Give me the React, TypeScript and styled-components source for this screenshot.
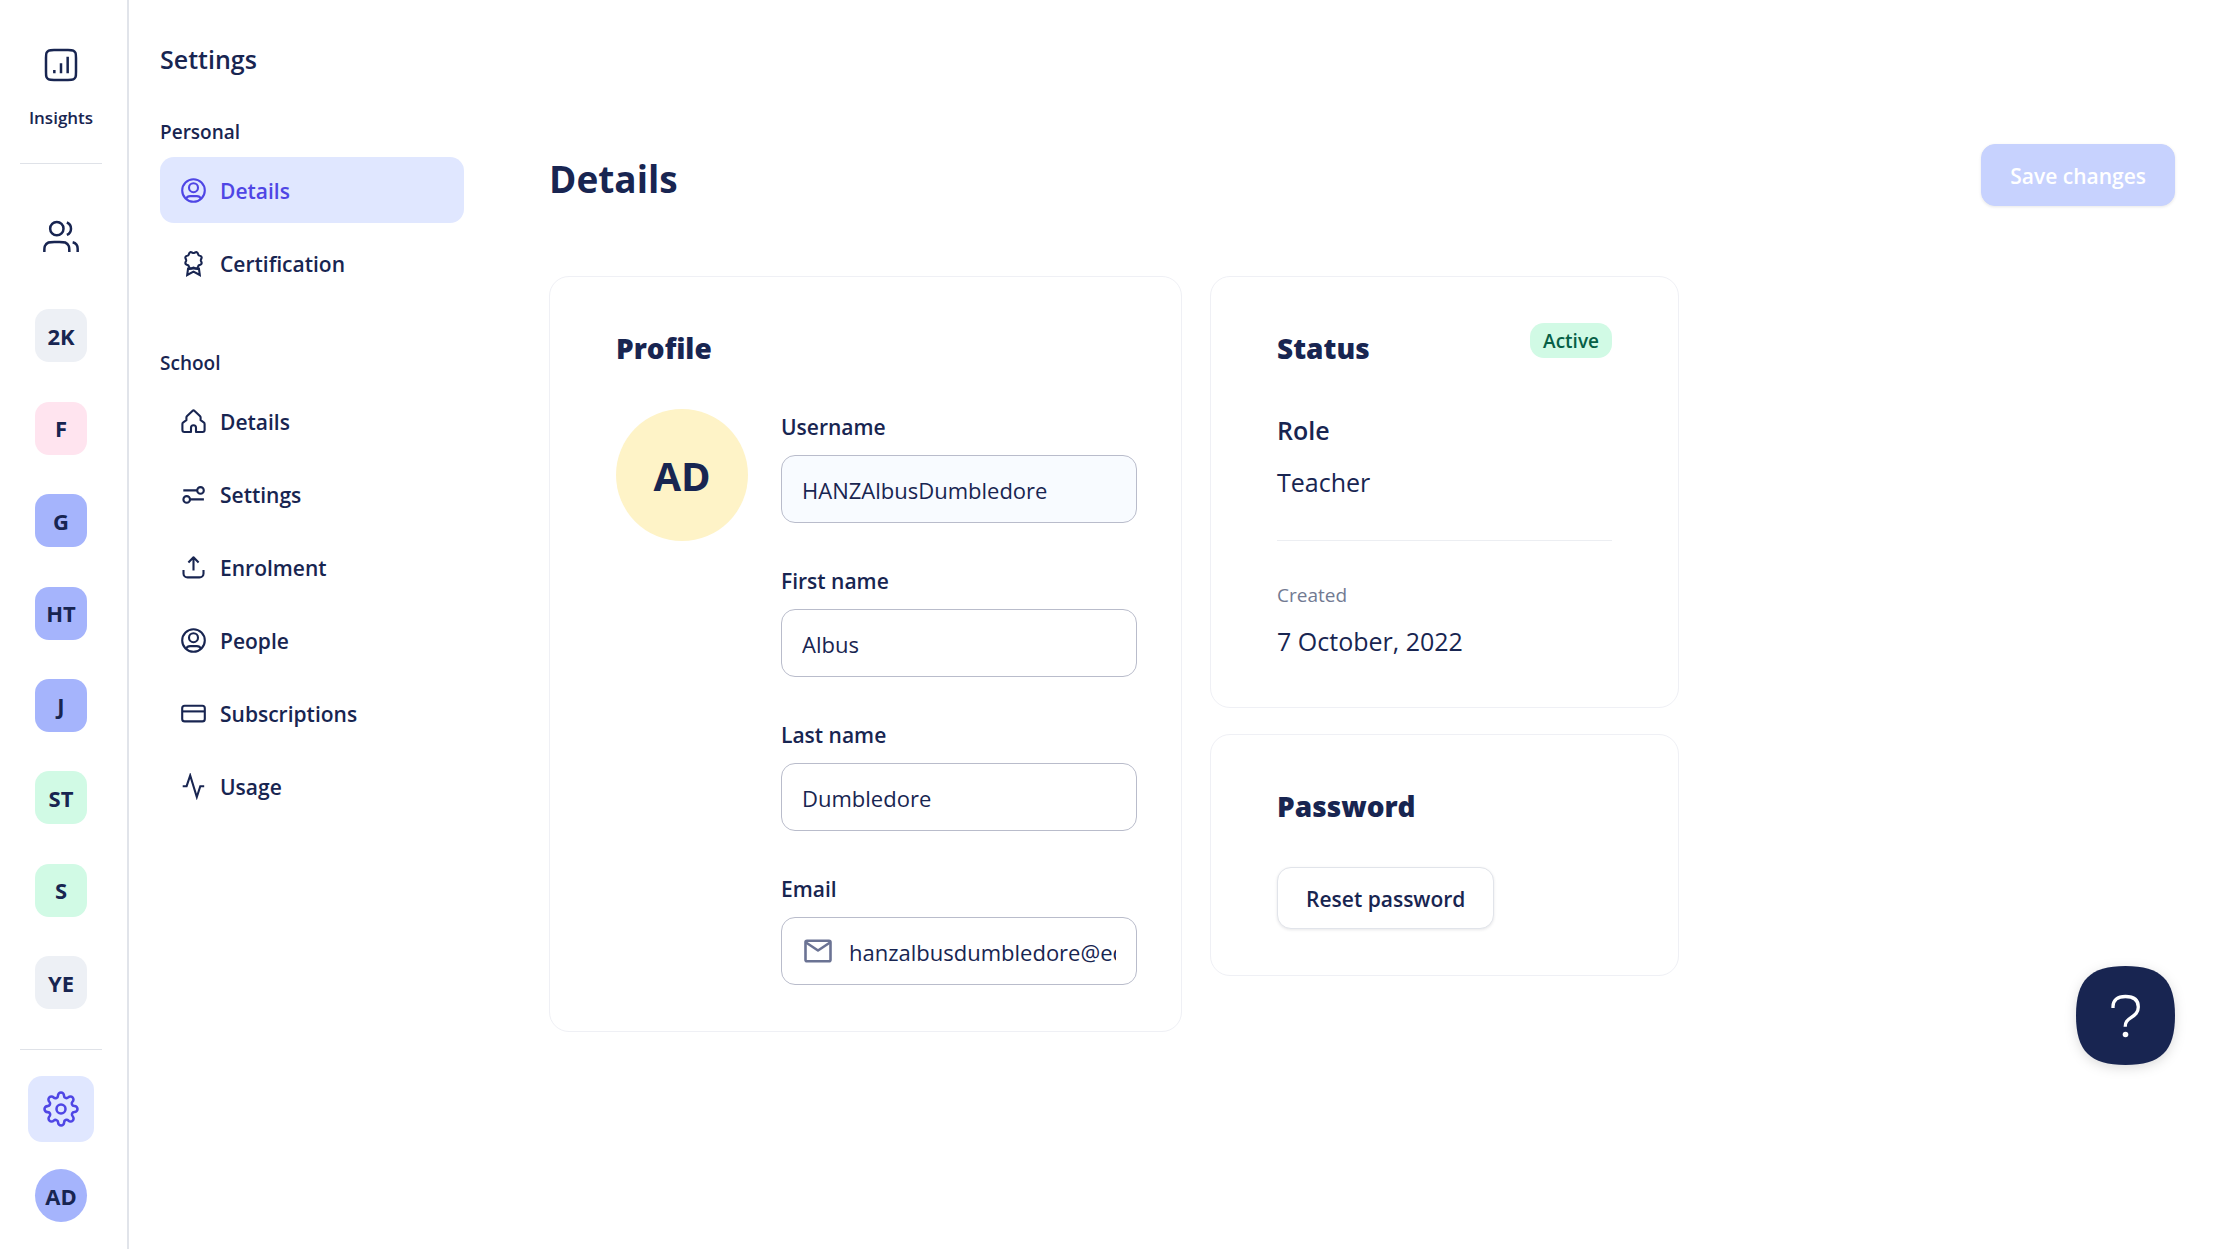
import React from "react";
import styled, { createGlobalStyle } from "styled-components";
import { FiSettings } from "react-icons/fi";

const navy = "#182551";
const indigo = "#4f46e5";
const lilac = "#e0e7ff";

const GlobalStyle = createGlobalStyle`
  *, *::before, *::after { box-sizing: border-box; }
  body {
    margin: 0;
    background: #fff;
    color: ${navy};
    font-family: "Open Sans", "Noto Sans", sans-serif;
    font-size: 21px;
  }
  h1, h2, h3, p, ul, dl, dd, dt { margin: 0; padding: 0; }
  ul { list-style: none; }
  a { color: inherit; text-decoration: none; }
  button, input { font: inherit; color: inherit; }
`;

const Shell = styled.div`
  display: flex;
  min-height: 100vh;
`;

/* ---------- Left rail ---------- */

const Rail = styled.nav`
  flex: none;
  display: flex;
  flex-direction: column;
  align-items: center;
  width: 129px;
  height: 100vh;
  padding: 32px 5px 27px 0;
  border-right: 2px solid #e1e4ea;
`;

const RailHeader = styled.div`
  padding-bottom: 31px;
`;

const RailLink = styled.a`
  display: flex;
  flex-direction: column;
  align-items: center;
`;

const IconBox = styled.span<{ $active?: boolean }>`
  display: flex;
  align-items: center;
  justify-content: center;
  width: 66px;
  height: 66px;
  border-radius: 14px;
  color: ${(p) => (p.$active ? indigo : navy)};
  background: ${(p) => (p.$active ? lilac : "transparent")};
`;

const RailLabel = styled.span`
  margin-top: 6px;
  font-size: 17px;
  line-height: 28px;
  font-weight: 600;
`;

const RailRule = styled.hr`
  width: 82px;
  height: 1px;
  margin: 0;
  border: 0;
  background: #dfe2e8;
`;

const RailList = styled.ul`
  flex: 1;
  display: flex;
  flex-direction: column;
  align-items: center;
  justify-content: space-between;
  padding: 40px 0;
`;

const Tile = styled.a<{ $bg: string; $round?: boolean }>`
  display: flex;
  align-items: center;
  justify-content: center;
  width: 52px;
  height: 53px;
  border-radius: ${(p) => (p.$round ? "50%" : "14px")};
  background: ${(p) => p.$bg};
  font-size: 22px;
  font-weight: 700;
`;

const RailFooter = styled.div`
  display: flex;
  flex-direction: column;
  align-items: center;
  gap: 27px;
  padding-top: 26px;
`;

/* ---------- Settings menu ---------- */

const Menu = styled.nav`
  flex: none;
  width: 366px;
  padding: 39px 31px;
`;

const MenuTitle = styled.h2`
  font-size: 25px;
  line-height: 40px;
  font-weight: 600;
`;

const MenuGroup = styled.section`
  margin-top: 38px;

  & + & {
    margin-top: 52px;
  }
`;

const GroupTitle = styled.h3`
  margin-bottom: 10px;
  font-size: 19px;
  line-height: 30px;
  font-weight: 600;
`;

const MenuList = styled.ul`
  display: flex;
  flex-direction: column;
  gap: 7px;
`;

const MenuLink = styled.a<{ $active?: boolean }>`
  display: flex;
  align-items: center;
  gap: 13px;
  height: 66px;
  padding: 0 20px;
  border-radius: 14px;
  font-size: 21px;
  font-weight: 600;
  color: ${(p) => (p.$active ? indigo : navy)};
  background: ${(p) => (p.$active ? lilac : "transparent")};
`;

const MenuText = styled.span`
  padding-top: 2px;
`;

/* ---------- Content ---------- */

const Main = styled.main`
  flex: 1;
  min-width: 0;
  padding: 144px 52px 52px 54px;
`;

const PageHead = styled.header`
  display: flex;
  align-items: flex-start;
  justify-content: space-between;
`;

const PageTitle = styled.h1`
  font-size: 37px;
  line-height: 70px;
  font-weight: 700;
`;

const Button = styled.button<{ $primary?: boolean }>`
  height: 62px;
  padding: 2px 28px 0;
  border: 1px solid ${(p) => (p.$primary ? "#c7d2fe" : "#e1e4ea")};
  border-radius: 14px;
  background: ${(p) => (p.$primary ? "#c7d2fe" : "#fff")};
  color: ${(p) => (p.$primary ? "#fff" : navy)};
  font-size: 21px;
  font-weight: 600;
  box-shadow: 0 1px 3px rgba(16, 24, 40, 0.1);
`;

const Cards = styled.div`
  display: grid;
  grid-template-columns: minmax(0, 27fr) minmax(0, 20fr);
  gap: 28px;
  align-items: start;
  max-width: 1130px;
  margin-top: 62px;
`;

const Column = styled.div`
  display: flex;
  flex-direction: column;
  gap: 26px;
`;

const Card = styled.section`
  padding: 46px 66px;
  border: 1px solid #eff0f5;
  border-radius: 20px;
`;

const ProfileCard = styled(Card)`
  padding-right: 44px;
`;

const StatusCard = styled(Card)`
  padding-bottom: 42px;
`;

const CardHead = styled.div`
  display: flex;
  align-items: flex-start;
  justify-content: space-between;
`;

const CardTitle = styled.h2`
  font-size: 28px;
  line-height: 50px;
  font-weight: 800;
`;

const ProfileBody = styled.div`
  display: flex;
  align-items: flex-start;
  gap: 33px;
  margin-top: 36px;
`;

const Avatar = styled.div`
  flex: none;
  display: flex;
  align-items: center;
  justify-content: center;
  width: 132px;
  height: 132px;
  border-radius: 50%;
  background: #fef3c7;
  font-size: 40px;
  font-weight: 700;
`;

const Fields = styled.form`
  flex: 1;
  min-width: 0;
  display: flex;
  flex-direction: column;
  gap: 40px;
`;

const Field = styled.div`
  display: flex;
  flex-direction: column;
  gap: 10px;
`;

const Label = styled.label`
  font-size: 21px;
  line-height: 36px;
  font-weight: 600;
`;

const InputBox = styled.div<{ $muted?: boolean }>`
  display: flex;
  align-items: center;
  gap: 15px;
  height: 68px;
  padding: 0 20px;
  border: 1px solid #b9bccb;
  border-radius: 14px;
  background: ${(p) => (p.$muted ? "#f8fbff" : "#fff")};
  color: #6b7394;

  svg {
    flex: none;
  }
`;

const Input = styled.input`
  flex: 1;
  min-width: 0;
  padding: 1px 0 0;
  border: 0;
  outline: 0;
  background: transparent;
  color: ${navy};
  font-size: 22px;
`;

const Badge = styled.span`
  padding: 1px 13px 0;
  border-radius: 14px;
  background: #d1fae5;
  color: #065f46;
  font-size: 19px;
  line-height: 34px;
  font-weight: 600;
`;

const Facts = styled.dl`
  padding-top: 29px;
`;

const Term = styled.dt`
  font-size: 25px;
  line-height: 56px;
  font-weight: 600;
`;

const SmallTerm = styled.dt`
  margin-top: 34px;
  padding-top: 32px;
  border-top: 1px solid #eceef2;
  color: #717a92;
  font-size: 19px;
  line-height: 44px;
`;

const Value = styled.dd`
  font-size: 25px;
  line-height: 48px;
`;

const CardAction = styled.div`
  margin-top: 36px;
`;

const HelpButton = styled.button`
  position: fixed;
  right: 52px;
  bottom: 184px;
  width: 99px;
  height: 99px;
  padding: 0;
  border: 0;
  background: none;
  cursor: pointer;
  filter: drop-shadow(0 3px 6px rgba(0, 0, 0, 0.14));

  svg {
    display: block;
  }
`;

/* ---------- Icons ---------- */

type IconProps = { children: React.ReactNode };

const RailIcon = ({ children }: IconProps) => (
  <svg width="40" height="40" viewBox="0 0 24 24" fill="none" stroke="currentColor" strokeWidth="1.5" aria-hidden="true">
    {children}
  </svg>
);

const MenuIcon = ({ children }: IconProps) => (
  <svg width="27" height="27" viewBox="0 0 27 27" fill="none" stroke="currentColor" strokeWidth="2.1" strokeLinejoin="round" aria-hidden="true">
    {children}
  </svg>
);

const scallop =
  Array.from({ length: 96 }, (_, i) => {
    const a = (i / 96) * Math.PI * 2;
    const r = 8 - 0.7 * Math.cos(8 * a);
    const x = 13.5 + r * Math.sin(a);
    const y = 10.3 - r * Math.cos(a);
    return `${i ? "L" : "M"}${x.toFixed(2)} ${y.toFixed(2)}`;
  }).join("") + "Z";

const UserCircle = () => (
  <MenuIcon>
    <circle cx="13.5" cy="13.5" r="11.3" />
    <circle cx="13.5" cy="10.7" r="4.5" />
    <path d="M6 21.9c.7-1.6 2.3-2.8 4.1-2.8h6.8c1.8 0 3.4 1.2 4.1 2.8" />
  </MenuIcon>
);

const Rosette = () => (
  <MenuIcon>
    <path d={scallop} />
    <path d="M8.2 17.6 7.2 25l6.3-3.4 6.3 3.4-1-7.4M8 19.2c3.5-1.1 7.5-1.1 11 0" strokeLinejoin="miter" />
  </MenuIcon>
);

const House = () => (
  <MenuIcon>
    <path d="M11 24v-4.3a2.5 2.5 0 0 1 5 0V24h6.6a2 2 0 0 0 2-2v-6a2 2 0 0 0-.9-1.7L20.6 12.2V9.6a2.4 2.4 0 0 0-.7-1.7L14.6 2.9a1.6 1.6 0 0 0-2.2 0L7.1 7.9a2.4 2.4 0 0 0-.7 1.7v2.6L3.3 14.3A2 2 0 0 0 2.4 16v6a2 2 0 0 0 2 2Z" />
  </MenuIcon>
);

const Switches = () => (
  <MenuIcon>
    <circle cx="20.5" cy="9.4" r="3.3" />
    <path d="M3.3 9.4H17M10.2 18.4h13.7" />
    <circle cx="6.7" cy="18.4" r="3.3" />
  </MenuIcon>
);

const Upload = () => (
  <MenuIcon>
    <path d="M13.5 16.5V3.3M8.4 8.4l5.1-5.1 5.1 5.1M3.5 16v3.4a4 4 0 0 0 4 4h12a4 4 0 0 0 4-4V16" />
  </MenuIcon>
);

const CreditCard = () => (
  <MenuIcon>
    <rect x="2.2" y="5.8" width="22.6" height="15.6" rx="2.5" />
    <path d="M2.2 11.4h22.6" />
  </MenuIcon>
);

const Activity = () => (
  <MenuIcon>
    <path d="M2.7 13.2h3.9L10.2 2.5 16.8 24l3.5-10.8h3.9" strokeLinejoin="miter" />
  </MenuIcon>
);

const ChartSquare = () => (
  <RailIcon>
    <path d="M8 15v2M12 11v6M16 7v10M7.8 21h8.4c1.68 0 2.52 0 3.162-.327a3 3 0 0 0 1.311-1.311C21 18.72 21 17.88 21 16.2V7.8c0-1.68 0-2.52-.327-3.162a3 3 0 0 0-1.311-1.311C18.72 3 17.88 3 16.2 3H7.8c-1.68 0-2.52 0-3.162.327a3 3 0 0 0-1.311 1.311C3 5.28 3 6.12 3 7.8v8.4c0 1.68 0 2.52.327 3.162a3 3 0 0 0 1.311 1.311C5.28 21 6.12 21 7.8 21Z" />
  </RailIcon>
);

const Users = () => (
  <RailIcon>
    <path d="M22 21V19C22 17.1362 20.7252 15.5701 19 15.126M15.5 3.29076C16.9659 3.88415 18 5.32131 18 7C18 8.67869 16.9659 10.1159 15.5 10.7092M17 21C17 19.1362 17 18.2044 16.6955 17.4693C16.2895 16.4892 15.5108 15.7105 14.5307 15.3045C13.7956 15 12.8638 15 11 15H8C6.13623 15 5.20435 15 4.46927 15.3045C3.48915 15.7105 2.71046 16.4892 2.30448 17.4693C2 18.2044 2 19.1362 2 21M13.5 7C13.5 9.20914 11.7091 11 9.5 11C7.29086 11 5.5 9.20914 5.5 7C5.5 4.79086 7.29086 3 9.5 3C11.7091 3 13.5 4.79086 13.5 7Z" />
  </RailIcon>
);

const Mail = () => (
  <svg width="32" height="24" viewBox="0 0 32 24" fill="none" stroke="currentColor" strokeWidth="2.6" strokeLinejoin="round" aria-hidden="true">
    <rect x="3.5" y="1.7" width="25" height="20.6" rx="1.5" />
    <path d="M4 3.5l12 8 12-8" />
  </svg>
);

const HelpMark = () => (
  <svg width="99" height="99" viewBox="0 0 99 99" fill="none" aria-hidden="true">
    <path d="M0 49.5C0 14 14 0 49.5 0S99 14 99 49.5 85 99 49.5 99 0 85 0 49.5Z" fill={navy} />
    <path d="M37 42v-1.5c0-6 4-10 12.5-10S62.3 34.5 62.3 41c0 5.5-3.3 8-7.3 10.7s-5.8 4.5-5.8 9.1" stroke="#fff" strokeWidth="3.3" />
    <circle cx="49.5" cy="68.5" r="2.8" fill="#fff" />
  </svg>
);

/* ---------- Data ---------- */

const classes = [
  { name: "2K", bg: "#edf0f5" },
  { name: "F", bg: "#ffe4ef" },
  { name: "G", bg: "#a5b4fc" },
  { name: "HT", bg: "#a5b4fc" },
  { name: "J", bg: "#a5b4fc" },
  { name: "ST", bg: "#d1fae5" },
  { name: "S", bg: "#d1fae5" },
  { name: "YE", bg: "#edf0f5" },
];

const groups = [
  {
    title: "Personal",
    items: [
      { label: "Details", icon: <UserCircle />, active: true },
      { label: "Certification", icon: <Rosette />, active: false },
    ],
  },
  {
    title: "School",
    items: [
      { label: "Details", icon: <House />, active: false },
      { label: "Settings", icon: <Switches />, active: false },
      { label: "Enrolment", icon: <Upload />, active: false },
      { label: "People", icon: <UserCircle />, active: false },
      { label: "Subscriptions", icon: <CreditCard />, active: false },
      { label: "Usage", icon: <Activity />, active: false },
    ],
  },
];

const fields = [
  { id: "username", label: "Username", value: "HANZAlbusDumbledore", locked: true },
  { id: "first-name", label: "First name", value: "Albus" },
  { id: "last-name", label: "Last name", value: "Dumbledore" },
  { id: "email", label: "Email", value: "hanzalbusdumbledore@education.com", icon: <Mail /> },
];

export default function App() {
  return (
    <>
      <GlobalStyle />
      <Shell>
        <Rail>
          <RailHeader>
            <RailLink href="#insights">
              <IconBox>
                <ChartSquare />
              </IconBox>
              <RailLabel>Insights</RailLabel>
            </RailLink>
          </RailHeader>
          <RailRule />
          <RailList>
            <li>
              <RailLink href="#people" aria-label="People">
                <IconBox>
                  <Users />
                </IconBox>
              </RailLink>
            </li>
            {classes.map((c) => (
              <li key={c.name}>
                <Tile href={`#${c.name}`} $bg={c.bg}>
                  {c.name}
                </Tile>
              </li>
            ))}
          </RailList>
          <RailRule />
          <RailFooter>
            <RailLink href="#settings" aria-label="Settings">
              <IconBox $active>
                <FiSettings size={36} strokeWidth={1.7} />
              </IconBox>
            </RailLink>
            <Tile href="#me" $bg="#a5b4fc" $round>
              AD
            </Tile>
          </RailFooter>
        </Rail>

        <Menu>
          <MenuTitle>Settings</MenuTitle>
          {groups.map((g) => (
            <MenuGroup key={g.title}>
              <GroupTitle>{g.title}</GroupTitle>
              <MenuList>
                {g.items.map((item) => (
                  <li key={item.label}>
                    <MenuLink href="#" $active={item.active}>
                      {item.icon}
                      <MenuText>{item.label}</MenuText>
                    </MenuLink>
                  </li>
                ))}
              </MenuList>
            </MenuGroup>
          ))}
        </Menu>

        <Main>
          <PageHead>
            <PageTitle>Details</PageTitle>
            <Button type="button" $primary>
              Save changes
            </Button>
          </PageHead>
          <Cards>
            <ProfileCard>
              <CardTitle>Profile</CardTitle>
              <ProfileBody>
                <Avatar>AD</Avatar>
                <Fields>
                  {fields.map((f) => (
                    <Field key={f.id}>
                      <Label htmlFor={f.id}>{f.label}</Label>
                      <InputBox $muted={f.locked}>
                        {f.icon}
                        <Input id={f.id} defaultValue={f.value} readOnly={f.locked} />
                      </InputBox>
                    </Field>
                  ))}
                </Fields>
              </ProfileBody>
            </ProfileCard>
            <Column>
              <StatusCard>
                <CardHead>
                  <CardTitle>Status</CardTitle>
                  <Badge>Active</Badge>
                </CardHead>
                <Facts>
                  <Term>Role</Term>
                  <Value>Teacher</Value>
                  <SmallTerm>Created</SmallTerm>
                  <Value>7 October, 2022</Value>
                </Facts>
              </StatusCard>
              <Card>
                <CardTitle>Password</CardTitle>
                <CardAction>
                  <Button type="button">Reset password</Button>
                </CardAction>
              </Card>
            </Column>
          </Cards>
        </Main>
      </Shell>
      <HelpButton type="button" aria-label="Help">
        <HelpMark />
      </HelpButton>
    </>
  );
}
